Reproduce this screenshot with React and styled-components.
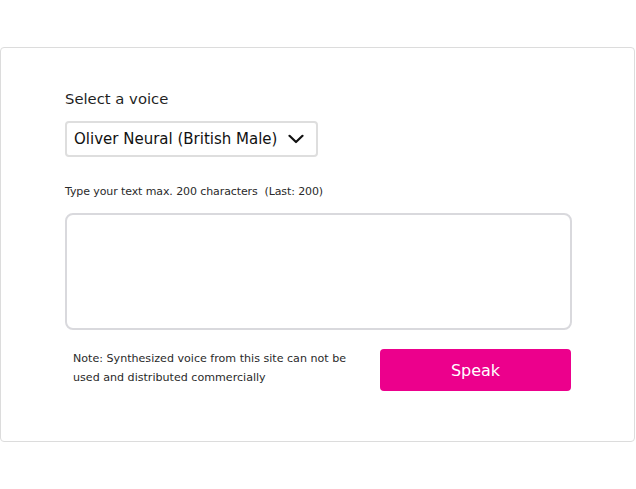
import React from "react";
import styled, { createGlobalStyle } from "styled-components";

const Global = createGlobalStyle`
  html, body { margin: 0; padding: 0; background: #fff; }
  body { font-family: "DejaVu Sans", "Liberation Sans", sans-serif; color: #1a1a1a; }
  * { box-sizing: border-box; }
`;

const Card = styled.div`
  margin-top: 47px;
  width: 635px;
  height: 395px;
  border: 1px solid #dcdcdc;
  border-radius: 4px;
  padding: 41px 63px 0 64px;
  display: flex;
  flex-direction: column;
`;

const Label = styled.label`
  font-size: 14.8px;
  line-height: 20px;
  color: #1f1f1f;
`;

const SelectBox = styled.div`
  margin-top: 12px;
  width: 253px;
  height: 36px;
  border: 2px solid #dedede;
  border-radius: 4px;
  display: flex;
  align-items: center;
  justify-content: space-between;
  padding: 0 12px 0 7px;
  font-size: 15px;
  white-space: nowrap;
  color: #111;
`;

const Hint = styled.div`
  margin-top: 27px;
  font-size: 11px;
  letter-spacing: -0.1px;
  line-height: 16px;
  color: #2a2a2a;
  white-space: pre;
`;

const TextArea = styled.div`
  margin-top: 13px;
  width: 507px;
  height: 117px;
  border: 2px solid #d9d9dd;
  border-radius: 8px;
`;

const Footer = styled.div`
  margin-top: 19px;
  display: flex;
  justify-content: space-between;
  align-items: flex-start;
`;

const Note = styled.p`
  margin: 0;
  padding-left: 8px;
  width: 290px;
  font-size: 11.1px;
  line-height: 19px;
  color: #2a2a2a;
`;

const SpeakButton = styled.button`
  width: 191px;
  height: 42px;
  border: none;
  border-radius: 4px;
  background: #ec008c;
  color: #fff;
  font-family: inherit;
  font-size: 16px;
  cursor: pointer;
`;

const Chevron = () => (
  <svg width="16" height="10" viewBox="0 0 16 10" fill="none">
    <path d="M1.5 1.8 L8 8 L14.5 1.8" stroke="#111" strokeWidth="2.2" strokeLinecap="round" strokeLinejoin="round" />
  </svg>
);

export default function App() {
  return (
    <>
      <Global />
      <Card>
        <Label>Select a voice</Label>
        <SelectBox>
          <span>Oliver Neural (British Male)</span>
          <Chevron />
        </SelectBox>
        <Hint>{"Type your text max. 200 characters  (Last: 200)"}</Hint>
        <TextArea />
        <Footer>
          <Note>Note: Synthesized voice from this site can not be used and distributed commercially</Note>
          <SpeakButton>Speak</SpeakButton>
        </Footer>
      </Card>
    </>
  );
}
